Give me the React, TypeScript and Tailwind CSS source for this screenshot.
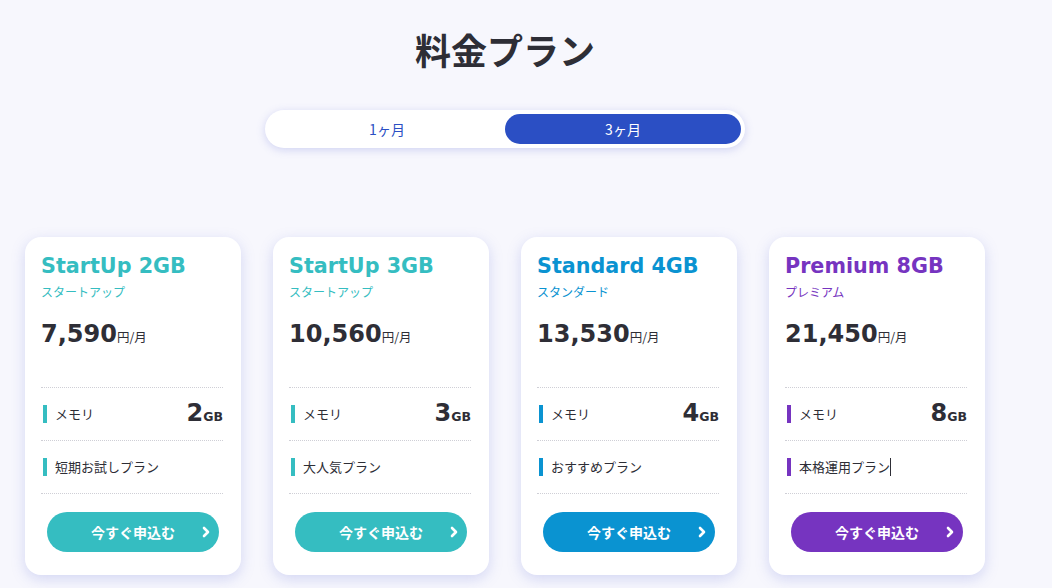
import React from 'react';

interface Plan {
  name: string;
  kana: string;
  price: string;
  memory: string;
  note: string;
  color: string;
  text: string;
  bg: string;
  caret?: boolean;
}

const plans: Plan[] = [
  { name: 'StartUp 2GB', kana: 'スタートアップ', price: '7,590', memory: '2', note: '短期お試しプラン', color: 'bg-[#35bdc1]', text: 'text-[#35bdc1]', bg: 'bg-[#35bdc1]' },
  { name: 'StartUp 3GB', kana: 'スタートアップ', price: '10,560', memory: '3', note: '大人気プラン', color: 'bg-[#35bdc1]', text: 'text-[#35bdc1]', bg: 'bg-[#35bdc1]' },
  { name: 'Standard 4GB', kana: 'スタンダード', price: '13,530', memory: '4', note: 'おすすめプラン', color: 'bg-[#0a93d1]', text: 'text-[#0a93d1]', bg: 'bg-[#0a93d1]' },
  { name: 'Premium 8GB', kana: 'プレミアム', price: '21,450', memory: '8', note: '本格運用プラン', color: 'bg-[#7634c0]', text: 'text-[#7634c0]', bg: 'bg-[#7634c0]', caret: true },
];

const jp = "font-['Noto_Sans_CJK_JP',sans-serif]";
const latin = "font-['DejaVu_Sans','Noto_Sans_CJK_JP',sans-serif]";

function PlanCard({ plan }: { plan: Plan }) {
  return (
    <div className="w-[216px] bg-white rounded-2xl pt-[15px] pl-4 pr-[18px] pb-[23px] shadow-[0_4px_14px_rgba(120,130,220,0.28)]">
      <h3 className={`${latin} text-[20.7px] leading-[28px] font-bold ${plan.text}`}>{plan.name}</h3>
      <p className={`${jp} text-[12px] leading-[20px] mt-[2px] ${plan.text}`}>{plan.kana}</p>
      <div className="mt-[14px] h-[34px] flex items-baseline text-[#2e2e36]">
        <span className={`${latin} text-[24px] font-bold`}>{plan.price}</span>
        <span className={`${jp} text-[12.5px]`}>円/月</span>
      </div>

      <div className="mt-[37px] border-t border-dotted border-[#cfcfd6]" />
      <div className="h-[53px] flex items-center justify-between border-b border-dotted border-[#cfcfd6]">
        <div className="flex items-center">
          <span className={`ml-[2px] w-1 h-[18px] ${plan.color}`} />
          <span className={`${jp} ml-2 text-[13px] text-[#2e2e36]`}>メモリ</span>
        </div>
        <div className="flex items-baseline text-[#2e2e36]">
          <span className={`${latin} text-[24px] font-bold leading-none`}>{plan.memory}</span>
          <span className={`${latin} text-[12.5px] font-bold`}>GB</span>
        </div>
      </div>
      <div className="h-[53px] flex items-center border-b border-dotted border-[#cfcfd6]">
        <span className={`ml-[2px] w-1 h-[18px] ${plan.color}`} />
        <span className={`${jp} ml-2 text-[13px] text-[#2e2e36]`}>{plan.note}</span>
        {plan.caret && <span className="w-px h-[18px] bg-[#2e2e36]" />}
      </div>

      <button className={`relative mt-[18px] ml-[6px] w-[172px] h-10 rounded-full ${plan.bg} text-white`}>
        <span className={`${jp} text-[14px] font-bold`}>今すぐ申込む</span>
        <svg className="absolute right-[8px] top-1/2 -translate-y-1/2" width="10" height="12" viewBox="0 0 10 12">
          <polyline points="3,2 7,6 3,10" fill="none" stroke="white" strokeWidth="2.6" strokeLinecap="round" strokeLinejoin="round" />
        </svg>
      </button>
    </div>
  );
}

export default function App() {
  return (
    <div className="min-h-screen bg-[#f7f7fd]">
      <div className="w-[1010px] px-[25px] pt-[25px] flex flex-col items-center">
        <h1 className={`${jp} text-[36px] leading-[48px] font-bold text-[#2e2e36]`}>料金プラン</h1>

        <div className="mt-[37px] w-[480px] h-[38px] p-1 bg-white rounded-full flex shadow-[0_2px_8px_rgba(120,130,220,0.3)]">
          <button className={`${jp} flex-1 rounded-full text-[14px] text-[#2b4fc4]`}>1ヶ月</button>
          <button className={`${jp} flex-1 rounded-full text-[14px] text-white bg-[#2b4fc4]`}>3ヶ月</button>
        </div>

        <div className="mt-[89px] w-full flex gap-8">
          {plans.map(p => (
            <PlanCard key={p.name} plan={p} />
          ))}
        </div>
      </div>
    </div>
  );
}
